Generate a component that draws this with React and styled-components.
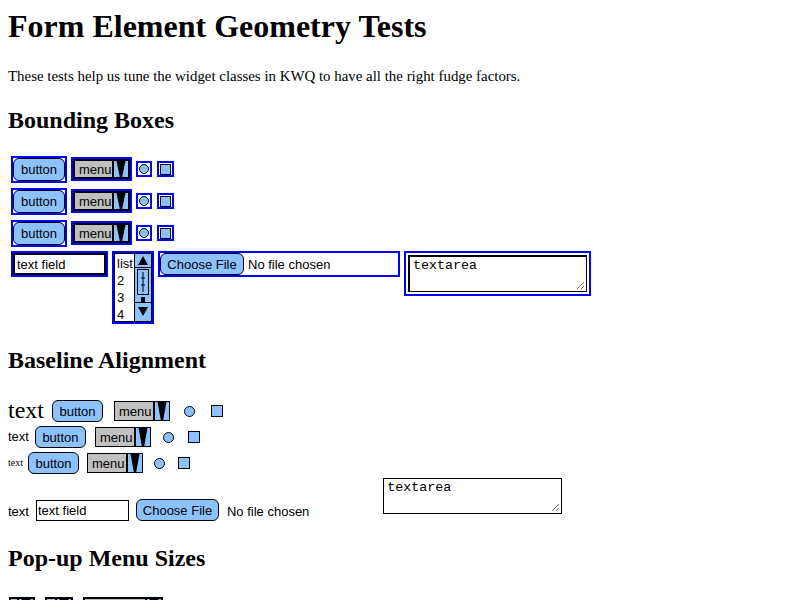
import React from "react";
import styled, { createGlobalStyle } from "styled-components";

const LIGHT = "#8cc3ff";
const SANS = `"Liberation Sans", Arial, sans-serif`;
const MONO = `"Liberation Mono", "Courier New", monospace`;

const GlobalStyle = createGlobalStyle`
  html, body { background: #fff; }
  body {
    margin: 8px;
    color: #000;
    font-family: "Liberation Serif", "Times New Roman", serif;
    overflow: hidden;
  }
`;

const Title = styled.h1`
  margin: 0;
  font-size: 32px;
  line-height: 36px;
  font-weight: bold;
`;

const Intro = styled.p`
  margin: 24px 0 0;
  font-size: 14.9px;
  line-height: 17px;
`;

const Heading = styled.h2`
  margin: ${(p) => p.$top}px 0 0;
  font-size: 24px;
  line-height: 28px;
  font-weight: bold;
`;

/* ---------- bounding boxes section ---------- */

const BoxRows = styled.div`
  margin-top: ${(p) => p.$top}px;
  display: flex;
  flex-direction: column;
  row-gap: 4px;
  padding-left: 3px;
`;

const BoxRow = styled.div`
  display: flex;
  align-items: ${(p) => p.$align || "center"};
  height: ${(p) => p.$h}px;
  column-gap: ${(p) => p.$gap || 4}px;
`;

const Outline = styled.div`
  box-sizing: border-box;
  display: flex;
  flex: none;
  width: ${(p) => p.$w}px;
  height: ${(p) => p.$h}px;
  margin-left: ${(p) => p.$ml || 0}px;
  padding: ${(p) => p.$pad || 0}px;
  border: 2px solid #0000ff;
  background: #fff;
  align-items: center;
  justify-content: center;
`;

const PushButton = styled.div`
  box-sizing: border-box;
  flex: none;
  width: ${(p) => p.$w}px;
  height: ${(p) => p.$h}px;
  margin-left: ${(p) => p.$ml || 0}px;
  margin-bottom: ${(p) => p.$mb || 0}px;
  display: flex;
  align-items: center;
  justify-content: center;
  background: ${LIGHT};
  border: 1px solid #000;
  border-radius: 6px;
  font: 13px ${SANS};
  white-space: nowrap;
`;

const Menu = styled.div`
  box-sizing: border-box;
  flex: none;
  width: ${(p) => p.$w}px;
  height: ${(p) => p.$h}px;
  margin-left: ${(p) => p.$ml || 0}px;
  display: flex;
  border: ${(p) => p.$bw}px solid #000;
  background: #c0c0c0;
  font: 13px ${SANS};
  overflow: hidden;
`;

const MenuLabel = styled.span`
  flex: 1;
  display: flex;
  align-items: center;
  padding-left: 4px;
  overflow: hidden;
  white-space: nowrap;
`;

const MenuArrow = styled.div`
  flex: none;
  width: 14px;
  display: flex;
  justify-content: center;
  background: ${LIGHT};
  border-left: 2px solid #000;
`;

const Funnel = () => (
  <svg width="12" height="100%" viewBox="0 0 12 20" preserveAspectRatio="none">
    <polygon points="1.5,0 10.5,0 7.2,20 4.8,20" fill="#000" />
  </svg>
);

const Dot = styled.div`
  box-sizing: border-box;
  flex: none;
  width: ${(p) => p.$size}px;
  height: ${(p) => p.$size}px;
  margin-left: ${(p) => p.$ml || 0}px;
  border: 1px solid #000;
  border-radius: 50%;
  background: ${LIGHT};
`;

const Square = styled.div`
  box-sizing: border-box;
  flex: none;
  width: ${(p) => p.$size}px;
  height: ${(p) => p.$size}px;
  margin-left: ${(p) => p.$ml || 0}px;
  border: 1px solid #000;
  background: ${LIGHT};
`;

const FieldInner = styled.div`
  box-sizing: border-box;
  width: 100%;
  height: 100%;
  border: ${(p) => p.$bw || 1}px solid #000;
  background: #fff;
  display: flex;
  align-items: center;
  padding-left: 2px;
  font: 13px ${SANS};
  white-space: nowrap;
`;

const ListInner = styled.div`
  box-sizing: border-box;
  width: 100%;
  height: 100%;
  border: 1px solid #000;
  display: flex;
`;

const ListItems = styled.div`
  flex: 1;
  padding: 1px 0 0 2px;
  font: 13px/17px ${SANS};
  overflow: hidden;
`;

const ScrollBar = styled.div`
  flex: none;
  width: 16px;
  display: flex;
  flex-direction: column;
  background: ${LIGHT};
  border-left: 1px solid #000;
`;

const ScrollCell = styled.div`
  box-sizing: border-box;
  height: ${(p) => p.$h}px;
  border-bottom: ${(p) => p.$bb || 0}px solid #000;
  border-top: ${(p) => p.$bt || 0}px solid #000;
  display: flex;
  align-items: center;
  justify-content: center;
`;

const Thumb = styled.div`
  box-sizing: border-box;
  height: 26px;
  margin: 1px 2px 0;
  border: 1px solid #000;
  background: ${LIGHT};
`;

const FileRow = styled.div`
  display: flex;
  align-items: center;
  column-gap: 4px;
  width: 100%;
  height: 100%;
  font: 13px ${SANS};
  white-space: nowrap;
`;

const AreaInner = styled.div`
  box-sizing: border-box;
  width: 100%;
  height: 100%;
  border: 1px solid #000;
  border-top-width: 2px;
  border-left-width: 2px;
  padding: 1px 3px;
  font: 13.33px/16px ${MONO};
  position: relative;
  background: #fff;
`;

const Grip = () => (
  <svg
    width="9"
    height="9"
    viewBox="0 0 9 9"
    style={{ position: "absolute", right: 1, bottom: 1 }}
  >
    <line x1="8" y1="1" x2="1" y2="8" stroke="#777" strokeWidth="1" />
    <line x1="8" y1="5" x2="5" y2="8" stroke="#777" strokeWidth="1" />
  </svg>
);

const Triangle = ({ up }) => (
  <svg width="10" height="9" viewBox="0 0 10 9">
    <polygon points={up ? "5,0 10,9 0,9" : "0,0 10,0 5,9"} fill="#000" />
  </svg>
);

/* ---------- baseline section ---------- */

const BaseRows = styled.div`
  margin-top: ${(p) => p.$top}px;
  display: flex;
  flex-direction: column;
`;

const BaseRow = styled.div`
  display: flex;
  align-items: ${(p) => p.$align || "center"};
  height: ${(p) => p.$h}px;
  column-gap: ${(p) => p.$space}px;
`;

const Word = styled.span`
  flex: none;
  font-family: ${(p) => (p.$sans ? SANS : `"Liberation Serif", serif`)};
  font-size: ${(p) => p.$size}px;
  line-height: 1.15;
  margin-left: ${(p) => p.$ml || 0}px;
  margin-bottom: ${(p) => p.$mb || 0}px;
  white-space: nowrap;
`;

const PlainField = styled.div`
  box-sizing: border-box;
  flex: none;
  width: ${(p) => p.$w}px;
  height: ${(p) => p.$h}px;
  margin-left: ${(p) => p.$ml || 0}px;
  margin-bottom: ${(p) => p.$mb || 0}px;
  border: 1px solid #000;
  display: flex;
  align-items: center;
  padding-left: 1px;
  font: 13px ${SANS};
  white-space: nowrap;
`;

const PlainArea = styled(AreaInner)`
  flex: none;
  width: ${(p) => p.$w}px;
  height: ${(p) => p.$h}px;
  margin-left: ${(p) => p.$ml || 0}px;
  margin-bottom: ${(p) => p.$mb || 0}px;
  border-width: 1px;
  border-top-width: 1px;
  border-left-width: 1px;
`;

const PopRow = styled.div`
  margin-top: 25px;
  display: flex;
  column-gap: 10px;
  padding-left: 1px;
`;

function MenuBox({ w, h, bw, ml, label = "menu" }) {
  return (
    <Menu $w={w} $h={h} $bw={bw} $ml={ml}>
      <MenuLabel>{label}</MenuLabel>
      <MenuArrow>
        <Funnel />
      </MenuArrow>
    </Menu>
  );
}

function BoundRow() {
  return (
    <BoxRow $h={28}>
      <Outline $w={56} $h={27}>
        <PushButton $w={52} $h={23}>
          button
        </PushButton>
      </Outline>
      <Outline $w={61} $h={24}>
        <MenuBox w={57} h={20} bw={2} />
      </Outline>
      <Outline $w={16} $h={16}>
        <Dot $size={10} />
      </Outline>
      <Outline $w={17} $h={16} $ml={1}>
        <Square $size={11} />
      </Outline>
    </BoxRow>
  );
}

function BaselineRow({ size, sans, space, h }) {
  return (
    <BaseRow $h={h} $space={space}>
      <Word $size={size} $sans={sans}>
        text
      </Word>
      <PushButton $w={51} $h={22} $ml={2}>
        button
      </PushButton>
      <MenuBox w={56} h={20} bw={1} ml={5} />
      <Dot $size={11} $ml={8} />
      <Square $size={12} $ml={10} />
    </BaseRow>
  );
}

export default function App() {
  return (
    <>
      <GlobalStyle />
      <Title>Form Element Geometry Tests</Title>
      <Intro>
        These tests help us tune the widget classes in KWQ to have all the
        right fudge factors.
      </Intro>

      <Heading $top={21}>Bounding Boxes</Heading>
      <BoxRows $top={21}>
        <BoundRow />
        <BoundRow />
        <BoundRow />
        <BoxRow $h={73} $align="flex-start">
          <Outline $w={97} $h={26}>
            <FieldInner $bw={2}>text field</FieldInner>
          </Outline>
          <Outline $w={42} $h={73}>
            <ListInner>
              <ListItems>
                <div>list</div>
                <div>2</div>
                <div>3</div>
                <div>4</div>
              </ListItems>
              <ScrollBar>
                <ScrollCell $h={14} $bb={1}>
                  <Triangle up />
                </ScrollCell>
                <Thumb>
                  <svg width="10" height="24" viewBox="0 0 10 24">
                    <line x1="5" y1="2" x2="5" y2="22" stroke="#000" />
                    <line x1="3" y1="8" x2="7" y2="8" stroke="#000" />
                    <line x1="3" y1="15" x2="7" y2="15" stroke="#000" />
                  </svg>
                </Thumb>
                <ScrollCell $h={7}>
                  <svg width="4" height="7" viewBox="0 0 4 7">
                    <rect x="0" y="2" width="4" height="5" fill="#000" />
                  </svg>
                </ScrollCell>
                <ScrollCell $h={20} $bt={1}>
                  <Triangle />
                </ScrollCell>
              </ScrollBar>
            </ListInner>
          </Outline>
          <Outline $w={242} $h={26}>
            <FileRow>
              <PushButton $w={84} $h={22}>
                Choose File
              </PushButton>
              No file chosen
            </FileRow>
          </Outline>
          <Outline $w={187} $h={45} $pad={2}>
            <AreaInner>
              textarea
              <Grip />
            </AreaInner>
          </Outline>
        </BoxRow>
      </BoxRows>

      <Heading $top={22}>Baseline Alignment</Heading>
      <BaseRows $top={24}>
        <BaselineRow size={24} space={6} h={26} />
        <BaselineRow size={13} sans space={4} h={26} />
        <BaselineRow size={10} space={3} h={26} />
        <BaseRow $h={46} $align="flex-end" $space={0}>
          <Word $size={13} $sans $mb={2}>
            text
          </Word>
          <PlainField $w={93} $h={21} $ml={7} $mb={1}>
            text field
          </PlainField>
          <PushButton $w={83} $h={22} $ml={7} $mb={1}>
            Choose File
          </PushButton>
          <Word $size={13} $sans $ml={8} $mb={2}>
            No file chosen
          </Word>
          <PlainArea $w={179} $h={36} $ml={74} $mb={8}>
            textarea
            <Grip />
          </PlainArea>
        </BaseRow>
      </BaseRows>

      <Heading $top={22}>Pop-up Menu Sizes</Heading>
      <PopRow>
        <MenuBox w={26} h={20} bw={2} label="" />
        <MenuBox w={28} h={20} bw={2} label="" />
        <MenuBox w={80} h={20} bw={2} label="" />
      </PopRow>
    </>
  );
}
